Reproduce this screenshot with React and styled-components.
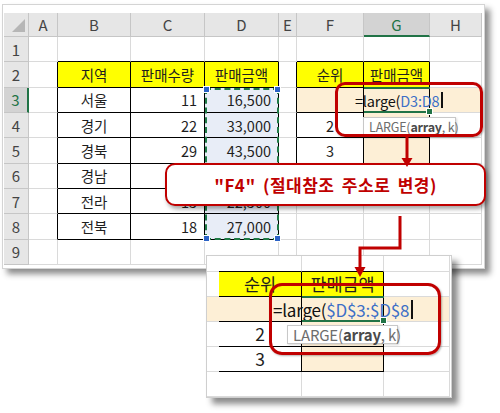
import styled, { createGlobalStyle } from "styled-components";

const GlobalStyle = createGlobalStyle`
  html, body { margin: 0; padding: 0; background: #fff; }
  body { font-family: "Noto Sans CJK KR", "Noto Sans", sans-serif; }
`;

const YELLOW = "#ffff00";
const PEACH = "#fdefd6";
const BLUE = "#e8edf7";
const GRID = "#dadada";
const RED = "#c00000";
const GREEN = "#217346";

const Canvas = styled.div`
  position: relative;
  width: 500px;
  height: 413px;
  overflow: hidden;
`;

const SheetFrame = styled.div`
  width: 480px;
  margin: 4px 0 0 2px;
  padding: 8px 0 3px 1px;
  background: #fff;
  border: 1px solid #d4d4d4;
  box-shadow: 5px 5px 6px rgba(0, 0, 0, 0.45);
`;

const SnippetFrame = styled.div`
  width: 244px;
  margin: -14px 0 0 206px;
  background: #fff;
  border: 1px solid #cfcfcf;
  box-shadow: 6px 6px 6px rgba(0, 0, 0, 0.45);
  position: relative;
`;

const Grid = styled.div`
  display: grid;
  grid-template-columns: ${(p) => p.$cols};
  grid-template-rows: ${(p) => p.$rows};
`;

const Cell = styled.div`
  grid-row: ${(p) => p.$r};
  grid-column: ${(p) => p.$c};
  box-sizing: border-box;
  display: flex;
  align-items: center;
  justify-content: ${(p) => (p.$align === "right" ? "flex-end" : "center")};
  padding: 0 7px;
  background: ${(p) => p.$bg || "#fff"};
  border-right: 1px solid ${(p) => p.$br || GRID};
  border-bottom: 1px solid ${(p) => p.$bb || GRID};
  font-size: ${(p) => p.$size}px;
  color: #1e1e1e;
  white-space: nowrap;
  overflow: hidden;
`;

const Head = styled.div`
  grid-row: ${(p) => p.$r};
  grid-column: ${(p) => p.$c};
  box-sizing: border-box;
  display: flex;
  align-items: center;
  justify-content: center;
  background: ${(p) => (p.$sel ? "#d3d3d3" : "#e6e6e6")};
  color: ${(p) => (p.$sel ? GREEN : "#444")};
  border-right: ${(p) => (p.$side && p.$sel ? `2px solid ${GREEN}` : "1px solid #c6c6c6")};
  border-bottom: ${(p) => (!p.$side && p.$sel ? `2px solid ${GREEN}` : "1px solid #c6c6c6")};
  font-size: 15px;
`;

const Corner = styled(Head)`
  position: relative;
  &::after {
    content: "";
    position: absolute;
    right: 3px;
    bottom: 4px;
    border-style: solid;
    border-width: 0 0 13px 13px;
    border-color: transparent transparent #b6b6b6 transparent;
  }
`;

const Marquee = styled.div`
  grid-column: ${(p) => p.$col};
  grid-row: ${(p) => p.$row};
  position: relative;
  box-sizing: border-box;
  border: 2px dashed #1f7a45;
`;

const Handle = styled.span`
  position: absolute;
  width: 5px;
  height: 5px;
  background: #2b62c6;
  border: 1px solid #fff;
  ${(p) => (p.$top ? "top: -4px;" : "bottom: -4px;")}
  ${(p) => (p.$left ? "left: -4px;" : "right: -4px;")}
`;

const Active = styled.div`
  grid-column: ${(p) => p.$col};
  grid-row: ${(p) => p.$row};
  position: relative;
  box-sizing: border-box;
  border-top: 2px solid ${GREEN};
  border-bottom: 2px solid ${GREEN};
  margin-top: -1px;
  &::after {
    content: "";
    position: absolute;
    right: -3px;
    bottom: -4px;
    width: 5px;
    height: 5px;
    background: ${GREEN};
    border: 1px solid #fff;
  }
`;

const Formula = styled.div`
  grid-column: ${(p) => p.$col};
  grid-row: ${(p) => p.$row};
  display: flex;
  align-items: center;
  padding-left: ${(p) => p.$indent}px;
  font-size: ${(p) => p.$size}px;
  color: #111;
  white-space: nowrap;
  letter-spacing: -0.2px;
`;

const Ref = styled.span`
  color: #3d6fc7;
`;

const Caret = styled.span`
  display: inline-block;
  width: 1.5px;
  height: 1.1em;
  margin-left: 2px;
  background: #111;
`;

const RedBox = styled.div`
  position: absolute;
  left: ${(p) => p.$x}px;
  top: ${(p) => p.$y}px;
  width: ${(p) => p.$w}px;
  height: ${(p) => p.$h}px;
  box-sizing: border-box;
  border: ${(p) => p.$bw}px solid ${RED};
  border-radius: ${(p) => p.$r}px;
  box-shadow: 1px 1px 2px rgba(0, 0, 0, 0.3);
`;

const Tip = styled.div`
  position: absolute;
  left: ${(p) => p.$x}px;
  top: ${(p) => p.$y}px;
  width: ${(p) => p.$w}px;
  height: ${(p) => p.$h}px;
  box-sizing: border-box;
  display: flex;
  align-items: center;
  padding-left: 5px;
  background: #fff;
  border: 1px solid #c8c8c8;
  box-shadow: 1px 1px 2px rgba(0, 0, 0, 0.15);
  font-size: ${(p) => p.$size}px;
  color: #6d6d6d;
  white-space: nowrap;
  letter-spacing: -0.2px;
  b { color: #4a4a4a; }
`;

const Callout = styled.div`
  position: absolute;
  left: 165px;
  top: 163px;
  width: 321px;
  height: 43px;
  box-sizing: border-box;
  display: flex;
  align-items: center;
  justify-content: center;
  background: #fff;
  border: 2px solid ${RED};
  border-radius: 10px;
  box-shadow: 2px 3px 4px rgba(0, 0, 0, 0.35);
  color: ${RED};
  font-size: 17px;
  font-weight: 700;
  letter-spacing: 0.5px;
  word-spacing: 3px;
  white-space: nowrap;
`;

const Arrows = styled.svg`
  position: absolute;
  left: 0;
  top: 0;
  pointer-events: none;
`;

const LETTERS = ["A", "B", "C", "D", "E", "F", "G", "H"];

const mainData = {
  B2: { t: "지역", bg: YELLOW }, C2: { t: "판매수량", bg: YELLOW }, D2: { t: "판매금액", bg: YELLOW },
  F2: { t: "순위", bg: YELLOW }, G2: { t: "판매금액", bg: YELLOW },
  B3: { t: "서울" }, C3: { t: "11", a: "right" }, D3: { t: "16,500", a: "right", bg: BLUE },
  F3: { bg: PEACH }, G3: { bg: PEACH }, H3: { bg: PEACH },
  B4: { t: "경기" }, C4: { t: "22", a: "right" }, D4: { t: "33,000", a: "right", bg: BLUE },
  F4: { t: "2" }, G4: { bg: PEACH },
  B5: { t: "경북" }, C5: { t: "29", a: "right" }, D5: { t: "43,500", a: "right", bg: BLUE },
  F5: { t: "3" }, G5: { bg: PEACH },
  B6: { t: "경남" }, C6: { t: "35", a: "right" }, D6: { t: "52,500", a: "right", bg: BLUE },
  B7: { t: "전라" }, C7: { t: "15", a: "right" }, D7: { t: "22,500", a: "right", bg: BLUE },
  B8: { t: "전북" }, C8: { t: "18", a: "right" }, D8: { t: "27,000", a: "right", bg: BLUE },
};
const mainTables = [
  { c0: 1, c1: 3, r0: 2, r1: 8 },
  { c0: 5, c1: 6, r0: 2, r1: 5 },
];

const snipData = {
  "1,1": { t: "순위", bg: YELLOW }, "2,1": { t: "판매금액", bg: YELLOW },
  "0,2": { bg: PEACH }, "1,2": { bg: PEACH }, "2,2": { bg: PEACH }, "3,2": { bg: PEACH },
  "1,3": { t: "2" }, "2,3": { bg: PEACH },
  "1,4": { t: "3" }, "2,4": { bg: PEACH },
};
const snipTables = [{ c0: 1, c1: 2, r0: 1, r1: 4 }];

const inTable = (tables, c, r) =>
  tables.some((t) => c >= t.c0 && c <= t.c1 && r >= t.r0 && r <= t.r1);

// gr/gc: grid line numbers, c/r: data indices used for table borders
function renderCell(key, d, tables, c, r, gr, gc, size) {
  const br = inTable(tables, c, r) || inTable(tables, c + 1, r) ? "#000" : undefined;
  const bb = inTable(tables, c, r) || inTable(tables, c, r + 1) ? "#000" : undefined;
  return (
    <Cell key={key} $r={gr} $c={gc} $bg={d?.bg} $align={d?.a} $br={br} $bb={bb} $size={size}>
      {d?.t}
    </Cell>
  );
}

function MainSheet() {
  const cells = [<Corner key="corner" $r={1} $c={1} />];
  LETTERS.forEach((l, i) =>
    cells.push(
      <Head key={l} $r={1} $c={i + 2} $sel={l === "G"}>
        {l}
      </Head>
    )
  );
  for (let r = 1; r <= 9; r++) {
    cells.push(
      <Head key={"r" + r} $r={r + 1} $c={1} $side $sel={r === 3}>
        {r}
      </Head>
    );
    LETTERS.forEach((l, c) =>
      cells.push(renderCell(l + r, mainData[l + r], mainTables, c, r, r + 1, c + 2, 14.5))
    );
  }
  return (
    <SheetFrame>
      <Grid $cols="25px 29px 73px 74px 74px 18px 67px 66px 52px" $rows="24px repeat(9, 25.33px)">
        {cells}
        <Marquee $col="5 / 6" $row="4 / 10">
          <Handle $top $left />
          <Handle $top />
          <Handle $left />
          <Handle />
        </Marquee>
        <Active $col="8 / 9" $row="4 / 5" />
        <Formula $col="7 / 10" $row="4 / 5" $indent={58} $size={14.5}>
          =large(<Ref>D3:D8</Ref>
          <Caret />
        </Formula>
      </Grid>
    </SheetFrame>
  );
}

function Snippet() {
  const cells = [];
  for (let r = 0; r <= 5; r++) {
    for (let c = 0; c <= 3; c++) {
      cells.push(
        renderCell(c + "," + r, snipData[c + "," + r], snipTables, c, r, r + 1, c + 1, 17.5)
      );
    }
  }
  return (
    <SnippetFrame>
      <Grid $cols="12px 83px 82px 66px" $rows="16px repeat(5, 25px)">
        {cells}
        <Active $col="3 / 4" $row="3 / 4" />
        <Formula $col="2 / 5" $row="3 / 4" $indent={54} $size={17}>
          =large(<Ref>$D$3:$D$8</Ref>
          <Caret />
        </Formula>
      </Grid>
    </SnippetFrame>
  );
}

export default function App() {
  return (
    <Canvas>
      <GlobalStyle />
      <MainSheet />
      <Snippet />
      <Tip $x={363} $y={117} $w={93} $h={18} $size={12.5}>
        LARGE(<b>array</b>, k)
      </Tip>
      <Tip $x={287} $y={325} $w={111} $h={19} $size={15}>
        LARGE(<b>array</b>, k)
      </Tip>
      <RedBox $x={335} $y={82} $w={148} $h={55} $bw={3} $r={10} />
      <RedBox $x={269} $y={283} $w={172} $h={72} $bw={3.5} $r={13} />
      <Callout>"F4" (절대참조 주소로 변경)</Callout>
      <Arrows width="500" height="413" viewBox="0 0 500 413">
        <g stroke={RED} strokeWidth="3" fill="none">
          <line x1="407" y1="137" x2="407" y2="160" />
          <polyline points="400,216 400,248 360,248 360,268" />
        </g>
        <g fill={RED}>
          <polygon points="401.5,158 412.5,158 407,167" />
          <polygon points="354.5,267 365.5,267 360,277" />
        </g>
      </Arrows>
    </Canvas>
  );
}
